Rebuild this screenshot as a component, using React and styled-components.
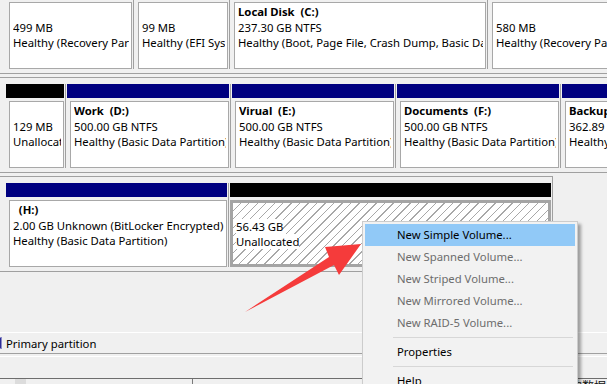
import styled, { createGlobalStyle } from 'styled-components';

const GlobalStyle = createGlobalStyle`
  html, body {
    margin: 0;
    padding: 0;
    background: #f0f0f0;
  }
`;

const Screen = styled.div`
  position: relative;
  width: 607px;
  height: 384px;
  overflow: hidden;
  background: #f0f0f0;
  display: flex;
  flex-direction: column;
  font-family: 'Noto Sans', 'Segoe UI', sans-serif;
  font-size: 11.3px;
  color: #000;
`;

const DiskArea = styled.div`
  flex: 0 0 332px;
  display: flex;
  flex-direction: column;
  gap: 3px;
`;

const DiskRow = styled.div`
  box-sizing: border-box;
  flex: none;
  width: ${(p) => p.$width}px;
  margin-top: ${(p) => p.$offset || 0}px;
  display: flex;
  padding: 6px 0 4px 6px;
  border: 1px solid #a0a0a0;
  border-left: none;
  background: #f0f0f0;
`;

const Cell = styled.div`
  box-sizing: border-box;
  flex: 0 0 ${(p) => p.$w}px;
  width: ${(p) => p.$w}px;
  min-width: 0;
  display: flex;
  flex-direction: column;
  padding-right: 1px;
  margin-right: 1px;
  border-right: 1px solid #a0a0a0;
`;

const Header = styled.div`
  height: 14px;
  background: ${(p) => p.$color};
`;

const Body = styled.div`
  box-sizing: border-box;
  height: 67px;
  min-width: 0;
  margin: 3px 0 0 ${(p) => (p.$selected ? 0 : 3)}px;
  padding: ${(p) => (p.$selected ? '0 2px 0 3px' : '1px 2px 0 3px')};
  border: ${(p) => (p.$selected ? '3px solid #a4a4a4' : '1px solid #a8a8a8')};
  background: ${(p) =>
    p.$hatched
      ? 'repeating-linear-gradient(135deg, #fff 0 5px, #a8a8a8 5px 6px)'
      : '#fff'};
  overflow: hidden;
`;

const Line = styled.div`
  height: 15.5px;
  line-height: 15.5px;
  white-space: pre;
  overflow: hidden;
  font-weight: ${(p) => (p.$bold ? 700 : 400)};
`;

const Label = styled.span`
  background: ${(p) => (p.$hatched ? '#fff' : 'transparent')};
`;

const Legend = styled.div`
  flex: 0 0 20px;
  display: flex;
  align-items: center;
  gap: 4px;
  border-top: 1px solid #fff;
  border-bottom: 1px solid #a0a0a0;
`;

const Swatch = styled.div`
  width: 10px;
  height: 10px;
  margin-left: -10px;
  background: #2c2c96;
  border: 1px solid #8c8cc8;
`;

const Status = styled.div`
  flex: 0 0 21px;
  margin-top: 2px;
  border-top: 1px solid #fff;
  border-bottom: 1px solid #6d6d6d;
`;

const BottomStrip = styled.div`
  flex: 1;
  display: flex;
  align-items: flex-start;
`;

const Tab = styled.div`
  width: 11px;
  height: 8px;
  margin-left: 15px;
  background: #dcdcdc;
`;

const Divider = styled.div`
  width: 1px;
  height: 8px;
  margin-left: 166px;
  background: #7a7a7a;
`;

const StripText = styled.div`
  margin-left: auto;
  padding-right: 1px;
  font-family: 'Noto Sans CJK SC', sans-serif;
  font-size: 12px;
  line-height: 14px;
  color: #111;
`;

const Menu = styled.div`
  position: absolute;
  left: 362px;
  top: 221px;
  width: 216px;
  box-sizing: border-box;
  padding: 2px;
  background: #f2f2f2;
  border: 1px solid #cccccc;
  box-shadow: 3px 3px 3px rgba(0, 0, 0, 0.35);
  font-size: 11.3px;
`;

const Item = styled.div`
  height: 22px;
  line-height: 22px;
  padding-left: 32px;
  white-space: nowrap;
  color: ${(p) => (p.$disabled ? '#6d6d6d' : '#000')};
  background: ${(p) => (p.$active ? '#91c9f7' : 'transparent')};
`;

const Separator = styled.div`
  height: 7px;
  display: flex;
  align-items: center;
  margin: 0 2px 0 28px;
  &::after {
    content: '';
    flex: 1;
    height: 1px;
    background: #d7d7d7;
  }
`;

const Overlay = styled.svg`
  position: absolute;
  left: 0;
  top: 0;
  pointer-events: none;
`;

const NAVY = '#000080';
const BLACK = '#000';

const rows = [
  {
    width: 700,
    offset: -22,
    cells: [
      { w: 128, color: NAVY, lines: ['', '499 MB', 'Healthy (Recovery Partition)'] },
      { w: 95, color: NAVY, lines: ['', '99 MB', 'Healthy (EFI System Partition)'] },
      {
        w: 257,
        color: NAVY,
        title: 'Local Disk  (C:)',
        lines: ['237.30 GB NTFS', 'Healthy (Boot, Page File, Crash Dump, Basic Data Partition)'],
      },
      { w: 200, color: NAVY, lines: ['', '580 MB', 'Healthy (Recovery Partition)'] },
    ],
  },
  {
    width: 700,
    cells: [
      { w: 60, color: BLACK, lines: ['', '129 MB', 'Unallocated'] },
      { w: 164, color: NAVY, title: 'Work  (D:)', lines: ['500.00 GB NTFS', 'Healthy (Basic Data Partition)'] },
      { w: 164, color: NAVY, title: 'Virual  (E:)', lines: ['500.00 GB NTFS', 'Healthy (Basic Data Partition)'] },
      { w: 164, color: NAVY, title: 'Documents  (F:)', lines: ['500.00 GB NTFS', 'Healthy (Basic Data Partition)'] },
      { w: 200, color: NAVY, title: 'Backup  (G:)', lines: ['362.89 GB NTFS', 'Healthy (Basic Data Partition)'] },
    ],
  },
  {
    width: 553,
    cells: [
      {
        w: 223,
        color: NAVY,
        title: '  (H:)',
        lines: ['2.00 GB Unknown (BitLocker Encrypted)', 'Healthy (Basic Data Partition)'],
      },
      { w: 323, color: BLACK, selected: true, hatched: true, lines: ['', '56.43 GB', 'Unallocated'] },
    ],
  },
];

const menu = [
  { label: 'New Simple Volume...', active: true },
  { label: 'New Spanned Volume...', disabled: true },
  { label: 'New Striped Volume...', disabled: true },
  { label: 'New Mirrored Volume...', disabled: true },
  { label: 'New RAID-5 Volume...', disabled: true },
  { sep: true },
  { label: 'Properties' },
  { sep: true },
  { label: 'Help' },
];

const Partition = ({ cell }) => (
  <Cell $w={cell.w}>
    <Header $color={cell.color} />
    <Body $selected={cell.selected} $hatched={cell.hatched}>
      {cell.title && <Line $bold>{cell.title}</Line>}
      {cell.lines.map((text, i) => (
        <Line key={i}>
          {text && <Label $hatched={cell.hatched}>{text}</Label>}
        </Line>
      ))}
    </Body>
  </Cell>
);

const App = () => (
  <Screen>
    <GlobalStyle />
    <DiskArea>
      {rows.map((row, i) => (
        <DiskRow key={i} $width={row.width} $offset={row.offset}>
          {row.cells.map((cell, j) => (
            <Partition key={j} cell={cell} />
          ))}
        </DiskRow>
      ))}
    </DiskArea>
    <Legend>
      <Swatch />
      <span>Primary partition</span>
    </Legend>
    <Status />
    <BottomStrip>
      <Tab />
      <Divider />
      <StripText>的数据</StripText>
    </BottomStrip>
    <Overlay width="607" height="384" viewBox="0 0 607 384">
      <polygon
        points="245,312 329,257 325,247 361,244 339,275 334,265"
        fill="#f53b3b"
      />
    </Overlay>
    <Menu>
      {menu.map((m, i) =>
        m.sep ? (
          <Separator key={i} />
        ) : (
          <Item key={i} $active={m.active} $disabled={m.disabled}>
            {m.label}
          </Item>
        )
      )}
    </Menu>
  </Screen>
);

export default App;
